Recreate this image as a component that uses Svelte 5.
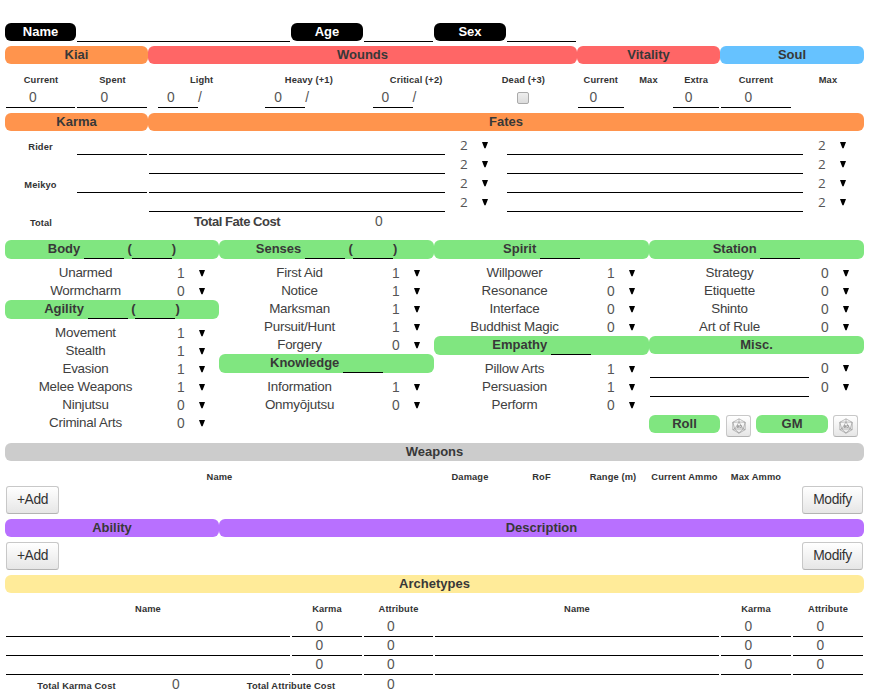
<script>
  const zeroSkill = (name) => ({ name, v: 0 });
  const oneSkill = (name) => ({ name, v: 1 });
  const columns = [
    [
      { title: 'Body', paren: true, skills: [oneSkill('Unarmed'), zeroSkill('Wormcharm')] },
      {
        title: 'Agility',
        paren: true,
        skills: [
          oneSkill('Movement'), oneSkill('Stealth'), oneSkill('Evasion'),
          oneSkill('Melee Weapons'), zeroSkill('Ninjutsu'), zeroSkill('Criminal Arts')
        ]
      }
    ],
    [
      {
        title: 'Senses',
        paren: true,
        skills: [
          oneSkill('First Aid'), oneSkill('Notice'), oneSkill('Marksman'),
          oneSkill('Pursuit/Hunt'), zeroSkill('Forgery')
        ]
      },
      { title: 'Knowledge', skills: [oneSkill('Information'), zeroSkill('Onmyōjutsu')] }
    ],
    [
      {
        title: 'Spirit',
        skills: [
          oneSkill('Willpower'), zeroSkill('Resonance'), zeroSkill('Interface'), zeroSkill('Buddhist Magic')
        ]
      },
      { title: 'Empathy', skills: [oneSkill('Pillow Arts'), oneSkill('Persuasion'), zeroSkill('Perform')] }
    ],
    [
      {
        title: 'Station',
        skills: [zeroSkill('Strategy'), zeroSkill('Etiquette'), zeroSkill('Shinto'), zeroSkill('Art of Rule')]
      }
    ]
  ];
  const karmaLabels = ['Rider', '', 'Meikyo', ''];
</script>

{#snippet arrow()}
  <svg class="arrow" width="6" height="7" viewBox="0 0 6 7"><path d="M0 0H6L3.6 6.3H2.4Z" /></svg>
{/snippet}

{#snippet die()}
  <button class="btn die" aria-label="Roll die">
    <svg width="16" height="16" viewBox="0 0 16 16" fill="none" stroke="#8c8c8c" stroke-width=".55">
      <path d="M8 .8 14.2 4.3V11.7L8 15.2 1.8 11.7V4.3Z" />
      <path d="M8 .8V4L3.8 11H12.2L8 4M1.8 4.3 8 4 14.2 4.3 12.2 11 14.2 11.7M1.8 4.3 3.8 11 1.8 11.7M3.8 11 8 15.2 12.2 11" />
      <path d="M6 7.5h1.5v2H6v-1h1.5M8.7 7.5h1.6v2H8.7z" stroke="#777" />
    </svg>
  </button>
{/snippet}

{#snippet group(g)}
  <div class="pill green tall">
    {g.title} <i class="blank"></i>{#if g.paren}{' '}(<i class="blank"></i>){/if}
  </div>
  <div class="skills">
    {#each g.skills as s}
      <div class="skill">
        <span class="sname">{s.name}</span><span class="num">{s.v}</span>{@render arrow()}
      </div>
    {/each}
  </div>
{/snippet}

<main>
  <div class="row identity">
    <div class="pill black name">Name</div>
    <div class="field s3"></div>
    <div class="pill black">Age</div>
    <div class="field"></div>
    <div class="pill black">Sex</div>
    <div class="field"></div>
  </div>

  <div class="row top">
    <div class="pill orange s2">Kiai</div>
    <div class="pill red s6">Wounds</div>
    <div class="pill red s2">Vitality</div>
    <div class="pill blue s2">Soul</div>
  </div>

  <div class="row stats">
    <div class="stat"><b>Current</b><span class="field narrow">0</span></div>
    <div class="stat"><b>Spent</b><span class="field left0">0</span></div>
    <div class="wounds s6">
      {#each ['Light', 'Heavy (+1)', 'Critical (+2)'] as w}
        <div class="stat"><b>{w}</b><div class="wound"><span>0</span>/</div></div>
      {/each}
      <div class="stat"><b>Dead (+3)</b><i class="check"></i></div>
    </div>
    <div class="vitality s2">
      <div class="stat"><b>Current</b><span class="field">0</span></div>
      <div class="stat"><b>Max</b></div>
      <div class="stat"><b>Extra</b><span class="field">0</span></div>
    </div>
    <div class="stat"><b>Current</b><span class="field">0</span></div>
    <div class="stat"><b>Max</b></div>
  </div>

  <div class="row">
    <div class="pill orange s2">Karma</div>
    <div class="pill orange s10">Fates</div>
  </div>

  <div class="fates">
    {#each karmaLabels as label}
      <div class="fate">
        <b>{label}</b>
        <i class="karma" class:line={label}></i>
        {#each [0, 1] as _}
          <i class="line long"></i><span class="rank">2</span>{@render arrow()}
        {/each}
      </div>
    {/each}
  </div>
  <div class="row fatetotal">
    <b>Total</b><span></span><strong>Total Fate Cost</strong><span class="sum">0</span>
  </div>

  <div class="attributes">
    {#each columns as col, i}
      <section>
        {#each col as g}{@render group(g)}{/each}
        {#if i === 3}
          <div class="pill green">Misc.</div>
          <div class="misc">
            {#each [0, 1] as _}
              <div class="miscrow"><i class="line"></i><span class="num">0</span>{@render arrow()}</div>
            {/each}
          </div>
          <div class="rolls">
            <div class="pill green">Roll</div>
            {@render die()}
            <div class="pill green gm">GM</div>
            {@render die()}
          </div>
        {/if}
      </section>
    {/each}
  </div>

  <div class="pill gray">Weapons</div>
  <div class="row labels">
    <b class="s6">Name</b><b>Damage</b><b>RoF</b><b>Range (m)</b><b>Current Ammo</b><b>Max Ammo</b>
  </div>
  <div class="actions"><button class="btn">+Add</button><button class="btn">Modify</button></div>

  <div class="row">
    <div class="pill purple s3">Ability</div>
    <div class="pill purple s9">Description</div>
  </div>
  <div class="actions second"><button class="btn">+Add</button><button class="btn">Modify</button></div>

  <div class="pill yellow">Archetypes</div>
  <div class="row labels">
    {#each [0, 1] as _}<b class="s4">Name</b><b>Karma</b><b>Attribute</b>{/each}
  </div>
  {#each [0, 1, 2] as _}
    <div class="row archrow">
      {#each [0, 1] as _}
        <span class="field s4"></span><span class="field">0</span><span class="field">0</span>
      {/each}
    </div>
  {/each}
  <div class="row totals">
    <b class="s2">Total Karma Cost</b><span>0</span><b class="s2">Total Attribute Cost</b><span>0</span>
  </div>
</main>

<style>
  :global(body) { background: #fff; overflow: hidden; }
  main {
    box-sizing: border-box; width: 871px; height: 698px; padding: 23px 7px 0 5px; overflow: hidden;
    font: 13px/18px "Liberation Sans", Arial, sans-serif; color: #404040;
  }
  i { font-style: normal; }
  .row {
    display: grid;
    grid-template-columns: 72px 71px 71px 72px 72px 71px 72px 71px 72px 71px 72px 72px;
  }
  .s2 { grid-column: span 2; }
  .s3 { grid-column: span 3; }
  .s4 { grid-column: span 4; }
  .s6 { grid-column: span 6; }
  .s9 { grid-column: span 9; }
  .s10 { grid-column: span 10; }
  .pill {
    height: 18px; border-radius: 6px; text-align: center; font-weight: bold;
    line-height: 18px; white-space: nowrap; color: #383838;
  }
  .orange { background: #ff944d; }
  .red { background: #ff6666; }
  .blue { background: #66c2ff; }
  .green { background: #80e680; }
  .gray { background: #ccc; }
  .purple { background: #b870ff; }
  .yellow { background: #ffeb99; }
  .black { background: #000; color: #fff; }
  b { font-size: 9.3px; letter-spacing: .13px; text-align: center; white-space: nowrap; color: #333; }
  .field { box-sizing: border-box; border-bottom: 1px solid #000; margin: 0 1px; }
  .stat .field, .wound, .num, .archrow .field, .totals span, .sum { font-size: 13.8px; letter-spacing: -.8px; }

  .identity { height: 23px; }
  .identity .name { margin-right: 1px; }
  .identity .field { height: 19px; margin: 0 1px; }
  .identity .name + .field { margin-left: 0; }

  .stats { height: 49px; }
  .stat { display: flex; flex-direction: column; padding-top: 7px; }
  .stat b { height: 17px; line-height: 18px; }
  .stat .field { height: 20px; line-height: 20px; text-align: center; padding-right: 16px; color: #555; }
  .stat .field.narrow { margin-right: 2px; }
  .stat .field.left0 { margin-left: 0; }
  .wounds { display: grid; grid-template-columns: repeat(4, 1fr); }
  .vitality { display: grid; grid-template-columns: repeat(3, 1fr); }
  .wound { display: flex; height: 20px; line-height: 20px; padding-left: 10px; color: #555; }
  .wound span { box-sizing: border-box; width: 40px; padding-left: 9px; border-bottom: 1px solid #000; }
  .check {
    box-sizing: border-box; width: 12px; height: 12px; margin: 4px auto 0; border: 1px solid #aaa;
    border-radius: 2px; background: linear-gradient(#eee, #dcdcdc);
  }

  .fates { padding-top: 5px; }
  .fate { display: flex; height: 19px; }
  .fate > * { flex: none; }
  .fate b { width: 71px; margin-right: 1px; line-height: 22px; }
  .fate .karma { width: 70px; margin-right: 2px; }
  .line { box-sizing: border-box; border-bottom: 1px solid #000; }
  .long { width: 296px; }
  .rank { font: 13.5px/19px "Open Sans", "Noto Sans", sans-serif; width: 37px; padding-left: 15px; box-sizing: border-box; color: #555; }
  .arrow { display: block; fill: #000; flex: none; }
  .fate :global(.arrow) { margin: 6px 19px 0 0; }
  .fate :global(.arrow:last-child) { margin-right: 0; }
  .fatetotal { height: 28px; }
  .fatetotal b { line-height: 22px; }
  .fatetotal strong { grid-column: span 3; letter-spacing: -.45px; padding-left: 46px; line-height: 19px; }
  .fatetotal .sum { padding-left: 12px; line-height: 19px; color: #555; }

  .attributes { display: grid; grid-template-columns: 214px 215px 215px 215px; height: 203px; }
  .tall { height: 19px; }
  .blank { display: inline-block; width: 40px; height: 18px; border-bottom: 1px solid #000; vertical-align: top; }
  .skills { padding-top: 5px; }
  .skill, .miscrow { display: flex; height: 18px; }
  .sname { width: 161px; text-align: center; font-size: 13.4px; letter-spacing: -.22px; }
  .num { box-sizing: border-box; width: 33px; padding-left: 11px; line-height: 19px; color: #555; }
  section:nth-child(2) .num, section:nth-child(3) .num { width: 34px; padding-left: 12px; }
  .skill .arrow, .miscrow .arrow { margin-top: 6px; }
  .misc { padding-top: 5px; }
  .miscrow { height: 19px; }
  .miscrow .line { width: 159px; margin: 0 1px; }
  .rolls { display: flex; padding-top: 18px; }
  .rolls .pill { width: 71px; margin-right: 6px; }
  .rolls .gm { width: 72px; margin: 0 5px; }
  .btn {
    box-sizing: border-box; border: 1px solid #c8c8c8; border-bottom-color: #b3b3b3; border-radius: 3px;
    background: linear-gradient(#fff, #e6e6e6); color: #333; height: 28px; padding: 0;
    font: 13.8px/24px "Liberation Sans", Arial, sans-serif; letter-spacing: -.35px;
  }
  .btn.die { width: 25px; height: 22px; padding: 2px 4px; }
  .btn svg { display: block; }

  .labels { height: 25px; }
  .labels b { line-height: 32px; }
  .actions { display: flex; justify-content: space-between; padding: 0 1px; height: 33px; }
  .actions .btn:first-child { width: 53px; }
  .actions .btn:last-child { width: 61px; }
  .second { padding-top: 5px; }
  .archrow { height: 19px; }
  .archrow .field { padding-right: 16px; text-align: center; line-height: 17px; color: #555; }
  .totals { height: 22px; }
  .totals b { line-height: 22px; }
  .totals span { text-align: center; padding-right: 16px; line-height: 19px; color: #555; }
</style>
